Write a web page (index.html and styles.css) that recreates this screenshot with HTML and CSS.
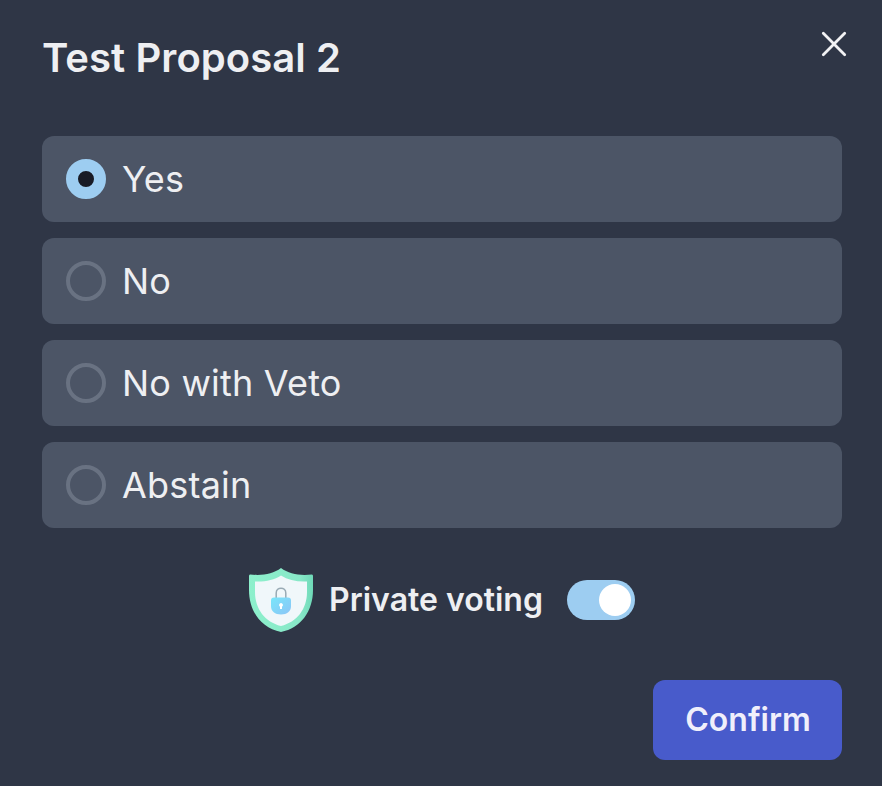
FILE: index.html
```html
<!DOCTYPE html>
<html lang="en">
<head>
<meta charset="utf-8">
<title>Test Proposal 2</title>
<link rel="stylesheet" href="styles.css">
</head>
<body>
<main class="modal">
  <header class="header">
    <h1 class="title">Test Proposal 2</h1>
    <button class="close" aria-label="Close">
      <svg width="28" height="28" viewBox="0 0 28 28" fill="none" stroke="currentColor" stroke-width="2.8" stroke-linecap="round"><path d="M3.300 3.300L24.700 24.700M24.700 3.300L3.300 24.700"/></svg>
    </button>
  </header>
  <div class="options" role="radiogroup">
    <div class="option" role="radio" aria-checked="true"><span class="radio radio-checked"></span><span>Yes</span></div>
    <div class="option" role="radio" aria-checked="false"><span class="radio"></span><span>No</span></div>
    <div class="option" role="radio" aria-checked="false"><span class="radio"></span><span>No with Veto</span></div>
    <div class="option" role="radio" aria-checked="false"><span class="radio"></span><span>Abstain</span></div>
  </div>
  <div class="privacy">
    <svg class="shield" width="64" height="64" viewBox="0 0 64 64">
      <defs>
        <linearGradient id="lock" x1="0" y1="0" x2="1" y2="1"><stop offset="0" stop-color="#78e6fa"/><stop offset="1" stop-color="#8cc4f6"/></linearGradient>
        <linearGradient id="rim" x1="0" y1="0" x2="1" y2="0"><stop offset="0" stop-color="#8df0cc"/><stop offset=".8" stop-color="#88e8c8"/><stop offset="1" stop-color="#6fd9b8"/></linearGradient>
      </defs>
      <path fill="url(#rim)" d="M32 0C24 6 13 8 1 6.500Q0 6.500 0 8V22C0 43 12 60 32 64C52 60 64 43 64 22V8Q64 6.500 63 6.500C51 8 40 6 32 0Z"/>
      <path fill="#f0f7fa" d="M32 7.500C25 12 16 14 6 13.500V24C6 41 16 54 32 58C48 54 58 41 58 24V13.500C48 14 39 12 32 7.500Z"/>
      <path fill="none" stroke="#98aab4" stroke-width="1.500" d="M27.200 30V25C27.200 18.500 36.800 18.500 36.800 25V30"/>
      <path d="M25 29.500H39Q42 29.500 42 32.500V38C42 43.500 38 46.500 32 46.500S22 43.500 22 38V32.500Q22 29.500 25 29.500Z" fill="url(#lock)"/>
      <path fill="#fff" d="M32 35a2 2 0 0 1 1 3.700V41h-2v-2.300a2 2 0 0 1 1-3.700Z"/>
    </svg>
    <span class="privacy-label">Private voting</span>
    <span class="switch" role="switch" aria-checked="true"><span class="thumb"></span></span>
  </div>
  <footer class="footer"><button class="confirm">Confirm</button></footer>
</main>
</body>
</html>
```
FILE: styles.css
```css
* { box-sizing: border-box; }
body { margin: 0; background: #2f3646; color: #eeeff2; font-family: Inter, "Liberation Sans", sans-serif; }
button { font: inherit; border: 0; padding: 0; }
.modal { height: 786px; padding: 30px 40px 26px 42px; }
.header { display: flex; justify-content: space-between; height: 106px; }
.title { margin: 0; font-size: 40px; line-height: 56px; font-weight: 600; letter-spacing: 0.07px; }
.close { width: 28px; height: 28px; margin-right: -6px; background: none; color: #f2f2f4; }
.close svg { display: block; }
.options { display: flex; flex-direction: column; gap: 16px; }
.option { display: flex; align-items: center; gap: 16px; height: 86px; padding: 0 24px; border-radius: 12px; background: #4c5566; font-size: 36px; letter-spacing: 0.2px; }
.radio { width: 40px; height: 40px; border: 4px solid #697282; border-radius: 50%; }
.radio-checked { border: 12px solid #9dcdf1; background: #181b26; }
.privacy { display: flex; align-items: center; justify-content: center; height: 64px; margin-top: 40px; }
.privacy-label { margin-left: 16px; padding-bottom: 2px; font-size: 32px; font-weight: 600; }
.switch { width: 68px; height: 40px; margin-left: 24px; padding: 4px; border-radius: 20px; background: #9dcdf1; }
.thumb { display: block; width: 32px; height: 32px; margin-left: auto; border-radius: 50%; background: #fff; }
.footer { display: flex; justify-content: flex-end; margin-top: 48px; }
.confirm { width: 189px; height: 80px; padding: 0 0 2px 1px; border-radius: 12px; background: #485bcb; color: #f0effb; font-size: 32px; font-weight: 600; }
```
